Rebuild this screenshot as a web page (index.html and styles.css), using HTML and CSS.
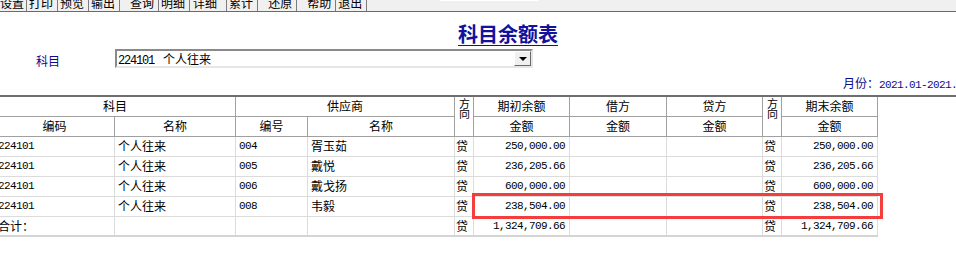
FILE: index.html
```html
<!DOCTYPE html>
<html lang="zh-CN">
<head>
    <meta charset="UTF-8">
    <meta name="viewport" content="width=device-width, initial-scale=1">
    <title>科目余额表</title>
    <link rel="stylesheet" href="styles.css">
</head>
<body>
<div class="toolbar">
    <span class="tb-btn tb-first">设置</span>
    <span class="tb-btn">打印</span>
    <span class="tb-btn">预览</span>
    <span class="tb-btn">输出</span>
    <span class="tb-btn tb-wide">查询</span>
    <span class="tb-btn">明细</span>
    <span class="tb-btn tb-long">详细</span>
    <span class="tb-btn">累计</span>
    <span class="tb-btn tb-wide">还原</span>
    <span class="tb-btn tb-wide">帮助</span>
    <span class="tb-btn">退出</span>
    <span class="tb-field"></span>
</div>

<h1 class="title"><span class="title-text">科目余额表</span></h1>

<div class="filter">
    <span class="filter-label">科目</span>
    <div class="combo">
        <span class="combo-text"><span class="num combo-code">224101</span>个人往来</span>
        <span class="combo-btn"><span class="arrow"></span></span>
    </div>
</div>

<div class="period">月份：<span class="num">2021.01-2021.12</span></div>
<div class="rule"></div>

<div class="report-wrap">
    <table class="report">
        <colgroup>
            <col class="c-code">
            <col class="c-name">
            <col class="c-sno">
            <col class="c-sname">
            <col class="c-dir">
            <col class="c-amt">
            <col class="c-amt2">
            <col class="c-amt">
            <col class="c-dir">
            <col class="c-amt">
        </colgroup>
        <thead>
        <tr class="head-top">
            <th colspan="2">科目</th>
            <th colspan="2">供应商</th>
            <th rowspan="2" class="dir"><span class="dir-text">方向</span></th>
            <th>期初余额</th>
            <th>借方</th>
            <th>贷方</th>
            <th rowspan="2" class="dir"><span class="dir-text">方向</span></th>
            <th>期末余额</th>
        </tr>
        <tr>
            <th>编码</th>
            <th>名称</th>
            <th>编号</th>
            <th>名称</th>
            <th>金额</th>
            <th>金额</th>
            <th>金额</th>
            <th>金额</th>
        </tr>
        </thead>
        <tbody>
        <tr>
            <td class="num">224101</td><td>个人往来</td><td class="num">004</td><td>胥玉茹</td>
            <td class="flag">贷</td><td class="num amt">250,000.00</td><td></td><td></td>
            <td class="flag">贷</td><td class="num amt">250,000.00</td>
        </tr>
        <tr>
            <td class="num">224101</td><td>个人往来</td><td class="num">005</td><td>戴悦</td>
            <td class="flag">贷</td><td class="num amt">236,205.66</td><td></td><td></td>
            <td class="flag">贷</td><td class="num amt">236,205.66</td>
        </tr>
        <tr>
            <td class="num">224101</td><td>个人往来</td><td class="num">006</td><td>戴戈扬</td>
            <td class="flag">贷</td><td class="num amt">600,000.00</td><td></td><td></td>
            <td class="flag">贷</td><td class="num amt">600,000.00</td>
        </tr>
        <tr>
            <td class="num">224101</td><td>个人往来</td><td class="num">008</td><td>韦毅</td>
            <td class="flag">贷</td><td class="num amt">238,504.00</td><td></td><td></td>
            <td class="flag">贷</td><td class="num amt">238,504.00</td>
        </tr>
        <tr class="total">
            <td>合计：</td><td></td><td></td><td></td>
            <td class="flag">贷</td><td class="num amt">1,324,709.66</td><td></td><td></td>
            <td class="flag">贷</td><td class="num amt">1,324,709.66</td>
        </tr>
        </tbody>
    </table>
    <div class="mark"></div>
</div>
</body>
</html>
```

FILE: styles.css
```css
* {
    box-sizing: border-box;
}
body {
    margin: 0;
    width: 956px;
    height: 277px;
    overflow: hidden;
    background-color: #ffffff;
    color: #000000;
    font-family: "Noto Sans CJK SC", sans-serif;
    font-size: 12px;
}
.num {
    font-family: "Liberation Mono", "Noto Sans CJK SC", monospace;
    font-size: 11px;
    letter-spacing: -0.6px;
}

/* toolbar, cut off at the top edge */
.toolbar {
    display: flex;
    height: 12px;
    background-color: #f0f0f0;
    border-bottom: 1px solid #6b6b6b;
    overflow: hidden;
}
.tb-btn {
    height: 11px;
    padding: 0 4px 0 2px;
    border-right: 1px solid #7c7c7c;
    line-height: 6px;
    white-space: nowrap;
}
.tb-first {
    padding: 0 2px 0 0;
}
.tb-wide {
    padding-left: 10px;
}
.tb-long {
    padding: 0 9px 0 3px;
}
.tb-field {
    width: 99px;
    height: 1px;
    margin-left: 73px;
    background-color: #ffffff;
}

/* title */
.title {
    margin: 9px 0 0;
    padding-left: 458px;
    font-size: 20px;
    font-weight: bold;
    line-height: 26px;
    color: #12129c;
}
.title-text {
    text-decoration: underline;
    text-decoration-thickness: 1px;
    text-underline-offset: 3px;
}

/* subject selector */
.filter {
    display: flex;
    height: 19px;
    margin-top: 2px;
    padding-left: 36px;
}
.filter-label {
    width: 79px;
    padding-top: 2px;
    line-height: 19px;
    color: #0b0b8e;
}
.combo {
    display: flex;
    width: 418px;
    height: 19px;
    border: 2px solid;
    border-color: #8a8a8a #e6e6e6 #e6e6e6 #8a8a8a;
    background-color: #ffffff;
}
.combo-text {
    flex: 1;
    padding-left: 1px;
    line-height: 15px;
    white-space: nowrap;
}
.combo-code {
    font-size: 12px;
    letter-spacing: -1.2px;
    margin-right: 9px;
}
.combo-btn {
    display: flex;
    align-items: center;
    justify-content: center;
    width: 17px;
    height: 15px;
    background-color: #f0f0f0;
    border: 1px solid;
    border-color: #ffffff #696969 #696969 #ffffff;
}
.arrow {
    width: 0;
    height: 0;
    border-left: 4px solid transparent;
    border-right: 4px solid transparent;
    border-top: 4px solid #000000;
}

/* period line */
.period {
    margin-top: 8px;
    padding-left: 843px;
    line-height: 14px;
    color: #0b0b8e;
    white-space: nowrap;
}
.rule {
    height: 2px;
    margin-top: 3px;
    background-color: #6e6e6e;
}

/* report table */
.report-wrap {
    position: relative;
}
.report {
    border-collapse: collapse;
    table-layout: fixed;
    width: 883px;
    margin-left: -6px;
}
.c-code { width: 120px; }
.c-name { width: 121px; }
.c-sno { width: 72px; }
.c-sname { width: 147px; }
.c-dir { width: 19px; }
.c-amt { width: 96px; }
.c-amt2 { width: 97px; }

.report th,
.report td {
    height: 20px;
    padding: 0 3px;
    line-height: 18px;
    font-weight: normal;
    white-space: nowrap;
    overflow: hidden;
    text-align: left;
}
.report th {
    border: 1px solid #a0a0a0;
    text-align: center;
}
.report .head-top th {
    height: 19px;
    border-top: 0;
}
.report td {
    border: 1px solid #dcdcdc;
}
.report .dir {
    vertical-align: top;
    padding: 1px 0 0;
}
.dir-text {
    display: inline-block;
    writing-mode: vertical-rl;
    font-size: 11px;
    line-height: 17px;
    letter-spacing: -1px;
}
.report .flag {
    padding: 0 0 0 1px;
}
.report .amt {
    text-align: right;
    padding-right: 4px;
}
.report .total td {
    border-bottom: 2px solid #d4d4d4;
}

/* red highlight drawn over the fourth row */
.mark {
    position: absolute;
    left: 472px;
    top: 96px;
    width: 411px;
    height: 26px;
    border: 3px solid #f43e3e;
}
```
